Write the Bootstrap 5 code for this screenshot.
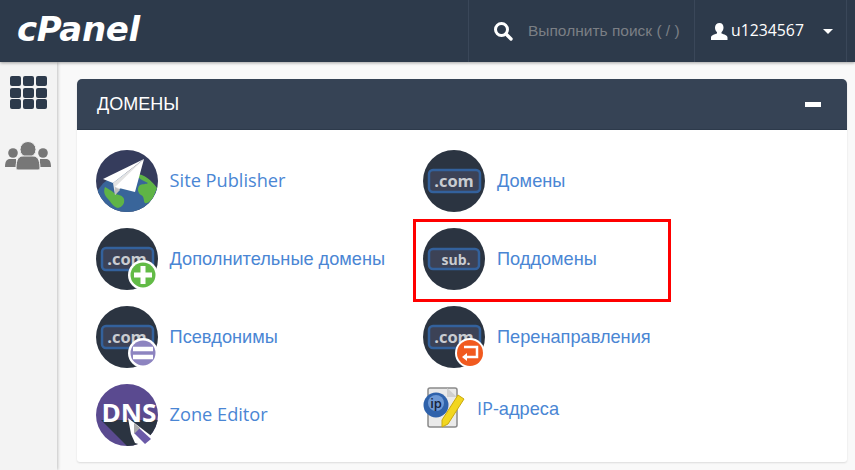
<!DOCTYPE html>
<html lang="ru">
<head>
    <meta charset="UTF-8">
    <meta name="viewport" content="width=device-width, initial-scale=1.0">
    <title>cPanel - Домены</title>
    <link href="https://cdn.jsdelivr.net/npm/bootstrap@5.3.0/dist/css/bootstrap.min.css" rel="stylesheet">
    <style>
        html, body { height: 100%; overflow: hidden; }
        body {
            background-color: #f9f9f9;
            font-family: "Open Sans", "Liberation Sans", sans-serif;
            font-size: 16px;
        }
        .ru-text { font-family: "Liberation Sans", sans-serif; }
        .top-bar {
            height: 62px;
            background-color: #2d3a4b;
            box-shadow: 0 1px 3px rgba(0,0,0,.35);
            position: relative;
            z-index: 2;
        }
        .brand-text {
            font-family: "DejaVu Sans", sans-serif;
            font-weight: 700;
            font-style: italic;
            font-size: 34px;
            line-height: 1;
            letter-spacing: -.3px;
            color: #fff;
            margin-left: 17px;
            margin-top: -4px;
        }
        .search-box {
            width: 227px;
            height: 62px;
            border-left: 1px solid #3a4759;
            border-right: 1px solid #3a4759;
            padding-left: 24px;
            color: #7b7f85;
            font-size: 15.5px;
            gap: 15px;
        }
        .user-box {
            width: 152px;
            height: 62px;
            margin-right: 8px;
            border-right: 1px solid #3a4759;
            padding-left: 16px;
            color: #fff;
            font-size: 15.8px;
            gap: 3px;
        }
        .user-caret {
            width: 0;
            height: 0;
            border-left: 5px solid transparent;
            border-right: 5px solid transparent;
            border-top: 5px solid #fff;
            margin-left: 16px;
        }
        .side-bar {
            width: 57px;
            height: 408px;
            background-color: #f3f3f3;
            box-shadow: 1px 0 3px rgba(0,0,0,.22);
            padding-top: 14px;
            gap: 32px;
        }
        .tile-grid {
            display: grid;
            grid-template-columns: repeat(3, 11px);
            grid-auto-rows: 10px;
            gap: 1.5px 2px;
        }
        .tile-grid i { display: block; background-color: #2d3a4b; border-radius: 2px; }
        .content-area { padding: 17px 8px 0 20px; flex: 1; }
        .domain-panel {
            height: 383px;
            background-color: #fff;
            border-radius: 5px 5px 3px 3px;
            box-shadow: 0 1px 2px rgba(0,0,0,.12);
        }
        .panel-head {
            height: 51px;
            background-color: #364355;
            border-radius: 5px 5px 0 0;
            border-bottom: 1px solid #2d3a4b;
            padding: 0 26px 0 20px;
            color: #fff;
            font-size: 18px;
        }
        .panel-minus { width: 16px; height: 5px; background-color: #fff; }
        .tool-grid {
            display: grid;
            grid-template-columns: 327.4px 327px;
            grid-auto-rows: 78px;
            padding: 20px 0 0 19px;
            position: relative;
        }
        .tool-item {
            display: flex;
            align-items: flex-start;
            color: #4a86d4;
            font-size: 18.2px;
            text-decoration: none;
            gap: 11.6px;
        }
        .tool-item > span { line-height: 62px; white-space: nowrap; }
        .tool-item > .latin-label { line-height: 60px; }
        .tool-item svg { flex: none; }
        .ip-item { padding-top: 3px; }
        .tool-item > .ip-label { line-height: 42px; }
        .red-frame {
            position: absolute;
            left: 336px;
            top: 89px;
            width: 258px;
            height: 83px;
            border: 3px solid #f00;
            pointer-events: none;
        }
        svg text { font-family: "Open Sans", sans-serif; font-weight: 700; }
    </style>
</head>
<body>
    <header class="top-bar d-flex align-items-center">
        <div class="brand-text">cPanel</div>
        <div class="search-box d-flex align-items-center ms-auto">
            <svg width="20" height="20" viewBox="0 0 20 20">
                <circle cx="8.5" cy="8.5" r="6" fill="none" stroke="#fff" stroke-width="3"/>
                <path d="M13 13l5 5" stroke="#fff" stroke-width="3.4" stroke-linecap="round"/>
            </svg>
            <span class="ru-text">Выполнить поиск ( / )</span>
        </div>
        <div class="user-box d-flex align-items-center">
            <svg width="17" height="17" viewBox="0 0 17 17">
                <path d="M8.5 0c2.6 0 4 2 4 4.500 0 2-.8 3.700-2 4.700v1.300c2.500.8 6 1.800 6 4V17H0v-2.500c0-2.200 3.500-3.200 6-4V9.200c-1.200-1-2-2.700-2-4.700C4 2 5.900 0 8.500 0z" fill="#fff"/>
            </svg>
            <span>u1234567</span>
            <span class="user-caret"></span>
        </div>
    </header>

    <div class="d-flex">
        <nav class="side-bar d-flex flex-column align-items-center">
            <div class="tile-grid">
                <i></i><i></i><i></i><i></i><i></i><i></i><i></i><i></i><i></i>
            </div>
            <svg width="48" height="30" viewBox="1 0 48 30">
                <g fill="#777">
                    <circle cx="9" cy="12" r="4.800"/>
                    <path d="M1 26c0-6 2-8 5-8h6v8z"/>
                    <circle cx="39" cy="12" r="4.800"/>
                    <path d="M47 26c0-6-2-8-5-8h-6v8z"/>
                    <circle cx="24" cy="8.500" r="8" stroke="#f3f3f3"/>
                    <path d="M12 27c0-9 3-12 7-12h10c4 0 7 3 7 12 0 1-1 2-2 2H14c-1 0-2-1-2-2z" stroke="#f3f3f3"/>
                </g>
            </svg>
        </nav>

        <main class="content-area">
            <section class="domain-panel">
                <div class="panel-head d-flex align-items-center justify-content-between">
                    <span class="ru-text">ДОМЕНЫ</span>
                    <div class="panel-minus"></div>
                </div>
                <div class="tool-grid">
                    <a class="tool-item" href="#">
                        <svg width="62" height="62" viewBox="0 0 62 62">
                            <defs><clipPath id="pubClip"><circle cx="31" cy="31" r="31"/></clipPath></defs>
                            <g clip-path="url(#pubClip)">
                                <rect width="62" height="62" fill="#353c5c"/>
                                <circle cx="32" cy="58" r="35" fill="#39659a"/>
                                <path d="M40 24c8 0 15 6 21 14l-4 10c-2 3-6 6-8 5-2-2 0-6-4-8-3-2-4-6-2-9 3-3 7-1 9-3-4-2-8-3-12-9z" fill="#5fb446"/>
                                <path d="M9 37c3 2 6 3 9 6 3 2 9 2 10 6 1 5-2 8-6 9-5-1-7-6-10-9-3-3-5-7-3-12z" fill="#5fb446"/>
                                <path d="M48 9L7 29l10 4z" fill="#fff"/>
                                <path d="M48 9L17 33l2 12z" fill="#e3e3e3"/>
                                <path d="M48 9L19 37l20 5z" fill="#fff"/>
                                <path d="M19 37v8l5-5z" fill="#bfbfbf"/>
                            </g>
                        </svg>
                        <span class="latin-label">Site Publisher</span>
                    </a>
                    <a class="tool-item" href="#">
                        <svg width="62" height="62" viewBox="0 0 62 62">
                            <circle cx="31" cy="31" r="31" fill="#2b3441"/>
                            <rect x="6" y="20" width="51" height="22" rx="4" fill="#3c4256" stroke="#33619c" stroke-width="2.500"/>
                            <text x="31" y="37" font-size="16.500" fill="#c9ccd1" text-anchor="middle">.com</text>
                        </svg>
                        <span class="ru-text">Домены</span>
                    </a>
                    <a class="tool-item" href="#">
                        <svg width="62" height="62" viewBox="0 0 62 62">
                            <circle cx="31" cy="31" r="31" fill="#2b3441"/>
                            <rect x="6" y="20" width="51" height="22" rx="4" fill="#3c4256" stroke="#33619c" stroke-width="2.500"/>
                            <text x="31" y="37" font-size="16.500" fill="#c9ccd1" text-anchor="middle">.com</text>
                            <circle cx="47" cy="47" r="15" fill="#fff"/>
                            <circle cx="47" cy="47" r="12.500" fill="#62bb46"/>
                            <path d="M47 38v18M38 47h18" stroke="#fff" stroke-width="5"/>
                        </svg>
                        <span class="ru-text">Дополнительные домены</span>
                    </a>
                    <a class="tool-item" href="#">
                        <svg width="62" height="62" viewBox="0 0 62 62">
                            <circle cx="31" cy="31" r="31" fill="#2b3441"/>
                            <rect x="6" y="21" width="50" height="20" rx="4" fill="#3c4256" stroke="#33619c" stroke-width="2.500"/>
                            <text x="33" y="37" font-size="14" fill="#c9ccd1" text-anchor="middle">sub.</text>
                        </svg>
                        <span class="ru-text">Поддомены</span>
                    </a>
                    <a class="tool-item" href="#">
                        <svg width="62" height="62" viewBox="0 0 62 62">
                            <circle cx="31" cy="31" r="31" fill="#2b3441"/>
                            <rect x="6" y="20" width="51" height="22" rx="4" fill="#3c4256" stroke="#33619c" stroke-width="2.500"/>
                            <text x="31" y="37" font-size="16.500" fill="#c9ccd1" text-anchor="middle">.com</text>
                            <circle cx="47" cy="47" r="15" fill="#fff"/>
                            <circle cx="47" cy="47" r="12.500" fill="#8d84c0"/>
                            <path d="M37 43h20M37 51h20" stroke="#fff" stroke-width="4.500"/>
                        </svg>
                        <span class="ru-text">Псевдонимы</span>
                    </a>
                    <a class="tool-item" href="#">
                        <svg width="62" height="62" viewBox="0 0 62 62">
                            <circle cx="31" cy="31" r="31" fill="#2b3441"/>
                            <rect x="6" y="20" width="51" height="22" rx="4" fill="#3c4256" stroke="#33619c" stroke-width="2.500"/>
                            <text x="31" y="37" font-size="16.500" fill="#c9ccd1" text-anchor="middle">.com</text>
                            <circle cx="47" cy="47" r="15" fill="#fff"/>
                            <circle cx="47" cy="47" r="13" fill="#f15a1f"/>
                            <path d="M41 41h13v10H42" fill="none" stroke="#fff" stroke-width="2.500"/>
                            <path d="M44 47l-5 4 5 4z" fill="#fff"/>
                        </svg>
                        <span class="ru-text">Перенаправления</span>
                    </a>
                    <a class="tool-item" href="#">
                        <svg width="62" height="62" viewBox="0 0 62 62">
                            <defs><clipPath id="dnsClip"><circle cx="31" cy="31" r="31"/></clipPath></defs>
                            <g clip-path="url(#dnsClip)">
                                <rect width="62" height="62" fill="#5a4a90"/>
                                <path d="M5 36h57v26H31z" fill="#2b3441"/>
                                <text x="33" y="38" font-size="25" fill="#fff" text-anchor="middle" textLength="55" lengthAdjust="spacingAndGlyphs">DNS</text>
                            </g>
                            <path d="M32 34l26 20-9 8-10-3-4-9z" fill="#fff"/>
                            <path d="M43 44l12 11-6 5-11-11z" fill="#6b5aa8"/>
                            <path d="M38 39l6 5-6 6z" fill="#aaa"/>
                        </svg>
                        <span class="latin-label">Zone Editor</span>
                    </a>
                    <a class="tool-item ip-item" href="#">
                        <svg width="42" height="42" viewBox="0 0 42 42">
                            <rect x="5" y="1" width="29" height="39" rx="2" fill="#eaeaea" stroke="#8a8a8a" stroke-width="1.500"/>
                            <path d="M24 1l10 9H24z" fill="#cfcfcf"/>
                            <circle cx="13" cy="18" r="12.500" fill="#2f62ab"/>
                            <circle cx="13" cy="16" r="8" fill="#6f9ad6"/>
                            <text x="13" y="21" font-size="13" fill="#17233b" text-anchor="middle" style="font-weight:600">ip</text>
                            <path d="M35 8l6 4-16 25-6 3 0-7z" fill="#f2d61f" stroke="#c9a90e"/>
                        </svg>
                        <span class="ip-label">IP-<span class="ru-text">адреса</span></span>
                    </a>
                    <div class="red-frame"></div>
                </div>
            </section>
        </main>
    </div>
</body>
</html>
